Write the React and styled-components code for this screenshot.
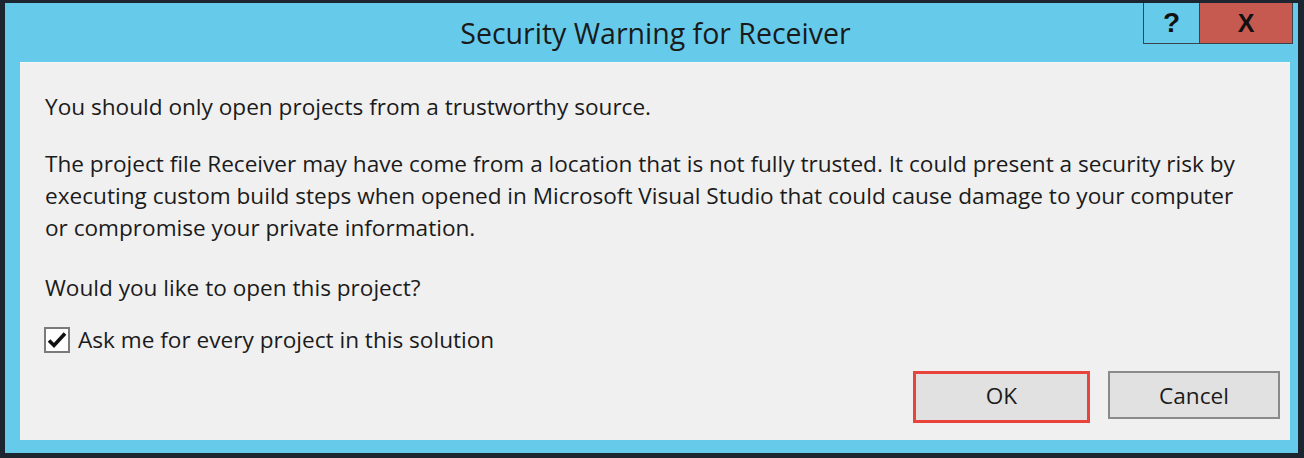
import React from 'react';
import styled, { createGlobalStyle } from 'styled-components';

const GlobalStyle = createGlobalStyle`
  html, body {
    margin: 0;
    padding: 0;
    background: #1c2530;
  }
  body {
    font-family: "Open Sans", "Noto Sans", sans-serif;
    color: #1b1b1b;
  }
`;

// Outer dark edge of the window, cyan frame inside it
const Window = styled.div`
  box-sizing: border-box;
  width: 1304px;
  height: 458px;
  border-style: solid;
  border-color: #1c2530;
  border-width: 3px 6px 5px 5px;
  background: #66cbea;
  display: flex;
  flex-direction: column;
  padding: 0 8px 13px 15px;
`;

const TitleBar = styled.div`
  height: 59px;
  display: grid;
  grid-template-columns: 1fr auto 1fr;
  align-items: start;
`;

const Title = styled.div`
  font-size: 28.5px;
  line-height: 34px;
  margin-top: 13px;
  margin-left: 1px;
  color: #1a1a1a;
  white-space: nowrap;
`;

const Controls = styled.div`
  justify-self: end;
  display: flex;
  margin-right: -3px;
  border: 1px solid #3b4248;
  border-top: none;
`;

const CaptionButton = styled.div`
  height: 40px;
  width: ${({ wide }) => (wide ? '92px' : '55px')};
  background: ${({ danger }) => (danger ? '#c75a50' : '#66cbea')};
  border-left: ${({ danger }) => (danger ? '1px solid #3b4248' : 'none')};
  display: flex;
  align-items: center;
  justify-content: center;
  font-family: "Liberation Sans", Arial, sans-serif;
  font-weight: bold;
  font-size: ${({ danger }) => (danger ? '25px' : '28px')};
  line-height: 1;
  color: #111;
`;

const Panel = styled.div`
  flex: 1;
  background: #f0f0f0;
  border-top: 1px solid #f7f7f7;
  padding: 28px 10px 17px 25px;
  display: flex;
  flex-direction: column;
  font-size: 22.6px;
`;

const Paragraph = styled.p`
  margin: 0 0 ${({ gap }) => gap}px 0;
  line-height: 32px;
  white-space: nowrap;
`;

const CheckRow = styled.label`
  display: flex;
  align-items: center;
  gap: 8px;
  line-height: 32px;
  margin-left: -1px;
`;

const Box = styled.span`
  box-sizing: border-box;
  width: 26px;
  height: 26px;
  border: 2px solid #7a7a7a;
  background: #fff;
  display: flex;
  align-items: center;
  justify-content: center;
`;

const Buttons = styled.div`
  margin-top: auto;
  display: flex;
  justify-content: flex-end;
  align-items: flex-start;
  gap: 18px;
`;

const Button = styled.button`
  box-sizing: border-box;
  width: ${({ highlight }) => (highlight ? '177px' : '172px')};
  height: ${({ highlight }) => (highlight ? '52px' : '48px')};
  background: #e1e1e1;
  border: ${({ highlight }) => (highlight ? '3px solid #e8443c' : '2px solid #8a8a8a')};
  font-family: inherit;
  font-size: 22.6px;
  color: #1b1b1b;
  padding: 0;
  padding-bottom: ${({ highlight }) => (highlight ? '4px' : '0')};
`;

export default function App() {
  return (
    <>
      <GlobalStyle />
      <Window>
        <TitleBar>
          <span />
          <Title>Security Warning for Receiver</Title>
          <Controls>
            <CaptionButton>?</CaptionButton>
            <CaptionButton danger wide>X</CaptionButton>
          </Controls>
        </TitleBar>
        <Panel>
          <Paragraph gap={25}>You should only open projects from a trustworthy source.</Paragraph>
          <Paragraph gap={28}>
            The project file Receiver may have come from a location that is not fully trusted. It could present a security risk by
            <br />
            executing custom build steps when opened in Microsoft Visual Studio that could cause damage to your computer
            <br />
            or compromise your private information.
          </Paragraph>
          <Paragraph gap={20}>Would you like to open this project?</Paragraph>
          <CheckRow>
            <Box>
              <svg width="20" height="18" viewBox="0 0 20 18">
                <path d="M2 9.5 L7 14.5 L18 2.5" fill="none" stroke="#111" strokeWidth="3.6" />
              </svg>
            </Box>
            Ask me for every project in this solution
          </CheckRow>
          <Buttons>
            <Button highlight>OK</Button>
            <Button>Cancel</Button>
          </Buttons>
        </Panel>
      </Window>
    </>
  );
}
